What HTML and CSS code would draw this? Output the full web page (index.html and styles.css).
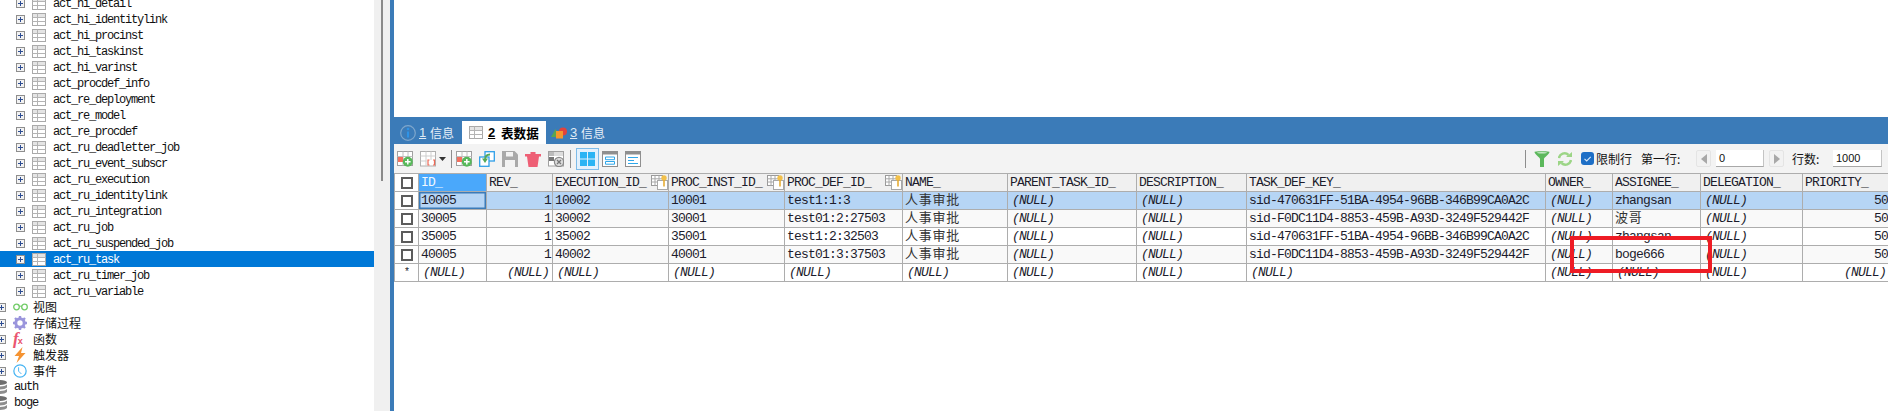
FILE: index.html
```html
<!DOCTYPE html>
<html lang="zh">
<head>
<meta charset="utf-8">
<title>SQLyog</title>
<link rel="stylesheet" href="styles.css">
</head>
<body>
<svg class="defs" width="0" height="0">
  <defs>
    <symbol id="plus" viewBox="0 0 9 9"><rect x=".5" y=".5" width="8" height="8" fill="#f2f2f2" stroke="#8e8e8e"/><path d="M2 4.5h5M4.5 2v5" stroke="#2c4c92" fill="none"/></symbol>
    <symbol id="tbl" viewBox="0 0 14 13"><rect x=".5" y=".5" width="13" height="12" fill="#fff" stroke="#a9a9a9"/><rect x="1" y="1" width="12" height="3" fill="#e4e4e4"/><path d="M.5 4.5h13M.5 8.5h13M5.5 .5v12" stroke="#b4b4b4" fill="none"/></symbol>
    <symbol id="glasses" viewBox="0 0 15 8"><circle cx="3.5" cy="4" r="2.8" fill="none" stroke="#72cc68" stroke-width="1.3"/><circle cx="11.5" cy="4" r="2.8" fill="none" stroke="#72cc68" stroke-width="1.3"/><path d="M6 3.2h3" stroke="#72cc68"/></symbol>
    <symbol id="gear" viewBox="0 0 14 14"><circle cx="7" cy="7" r="4.2" fill="none" stroke="#9a95dc" stroke-width="3"/><path d="M7 0v3M7 11v3M0 7h3M11 7h3M2 2l2 2M10 10l2 2M12 2l-2 2M4 10l-2 2" stroke="#9a95dc" stroke-width="2.4"/></symbol>
    <symbol id="bolt" viewBox="0 0 12 16"><path d="M8.500 0 .5 9h4.500L2.500 16 11.500 6H7z" fill="#f59332"/></symbol>
    <symbol id="clock" viewBox="0 0 15 15"><circle cx="7.5" cy="7.5" r="6.6" fill="#fff" stroke="#45b3f2" stroke-width="1.3"/><path d="M6 3.5v4.2l3 3" fill="none" stroke="#45b3f2"/></symbol>
    <symbol id="db" viewBox="0 0 7 14"><ellipse cx="0" cy="2.5" rx="7" ry="2.5" fill="#6e6e6e"/><path d="M-7 4.500c2 2.500 12 2.500 14 0v3c-2 2.500-12 2.500-14 0zM-7 9c2 2.500 12 2.500 14 0v3c-2 2.500-12 2.500-14 0z" fill="#8d8d8d"/></symbol>
    <symbol id="addrow" viewBox="0 0 16 16"><rect x=".5" y=".5" width="15" height="14" fill="#fff" stroke="#a0a0a0"/><path d="M.5 5.500h15M.5 10h15M6 .5v14M11 .5v14" stroke="#c0c0c0"/><rect x="1" y="6" width="5" height="5" fill="#f3705f"/><circle cx="10.800" cy="10.800" r="5" fill="#58b85a"/><path d="M8 10.800h5.600M10.800 8v5.600" stroke="#fff" stroke-width="1.500"/></symbol>
    <symbol id="filtergrid" viewBox="0 0 26 16"><rect x=".5" y=".5" width="15" height="14.500" fill="#fff" stroke="#b0b0b0"/><path d="M.5 5h15M.5 10h6M6 .5V15M11 .5V9" stroke="#cfcfcf"/><path d="M9.500 9H8v5h1.500M13 9h1.500v5H13" fill="none" stroke="#ee6b58" stroke-width="1.200"/><path d="M19 6h7l-3.500 4z" fill="#333"/></symbol>
    <symbol id="paste" viewBox="0 0 16 16"><rect x="6" y=".7" width="9.300" height="9.300" fill="#fff" stroke="#2f9fe8" stroke-width="1.300"/><rect x=".7" y="6" width="9.300" height="9.300" fill="#fff" stroke="#2f9fe8" stroke-width="1.300"/><path d="M11 3.500C7 3.500 6 6 6 9" fill="none" stroke="#55a858" stroke-width="1.800"/><path d="M3 7.500h6L6 12z" fill="#55a858"/></symbol>
    <symbol id="save" viewBox="0 0 16 16"><path d="M0 0h12.500L16 3.500V16H0z" fill="#a9a9a9"/><rect x="4" y="1" width="7" height="4.500" fill="#f3f3f3"/><rect x="3" y="9" width="10" height="7" fill="#f3f3f3"/></symbol>
    <symbol id="trash" viewBox="0 0 16 16"><path d="M0 3h16v2.500H0zM5.500 1h5v2h-5zM2 5.500h12L12.500 16h-9z" fill="#ee5f75"/></symbol>
    <symbol id="cancel" viewBox="0 0 16 16"><rect x=".5" y=".5" width="15" height="14.500" fill="#fff" stroke="#a0a0a0"/><rect x="1" y="1" width="5" height="4" fill="#bbb"/><rect x="1" y="6" width="5" height="4" fill="#777"/><rect x="6" y="1" width="9" height="4" fill="#ddd"/><circle cx="11" cy="11" r="4.600" fill="#ddd" stroke="#8a8a8a" stroke-width="1.200"/><path d="M9 9l4 4M13 9l-4 4" stroke="#777" stroke-width="1.300"/></symbol>
    <symbol id="panes" viewBox="0 0 15 14"><path d="M0 0h7v6.500H0zM8 0h7v6.500H8zM0 7.500h7V14H0zM8 7.500h7V14H8z" fill="#2bb4f4"/></symbol>
    <symbol id="form" viewBox="0 0 16 16"><rect x=".5" y=".5" width="15" height="15" fill="#fff" stroke="#8f8f8f"/><rect x="0" y="0" width="16" height="3.500" fill="#8f8f8f"/><path d="M3.500 6h9v2.700h-9zM3.500 10.500h9v2.700h-9z" fill="none" stroke="#2fa7ea"/></symbol>
    <symbol id="text" viewBox="0 0 16 16"><rect x=".5" y=".5" width="15" height="15" fill="#fff" stroke="#8f8f8f"/><rect x="0" y="0" width="16" height="3.500" fill="#8f8f8f"/><path d="M3 6.500h10M3 9.500h6M3 12.500h10" fill="none" stroke="#2fa7ea"/></symbol>
    <symbol id="funnel" viewBox="0 0 16 16"><path d="M.5 1c0-1 15-1 15 0 0 2-5.500 5.500-5.500 7v8H6V8C6 6.500.5 3 .5 1z" fill="#5cb85c"/><ellipse cx="8" cy="1.800" rx="5" ry=".8" fill="#c8e9c8"/></symbol>
    <symbol id="refresh" viewBox="0 0 14 14"><path d="M1 6C1.500 2 7-.5 10.500 3" fill="none" stroke="#9cd586" stroke-width="2.500"/><path d="M8 5h6V0z" fill="#9cd586"/><path d="M13 8c-.5 4-6 6.500-9.500 3" fill="none" stroke="#9cd586" stroke-width="2.500"/><path d="M6 9H0v5z" fill="#9cd586"/></symbol>
    <symbol id="check" viewBox="0 0 13 13"><rect width="13" height="13" rx="3" fill="#1e6fc6"/><path d="M3.500 6.800l2.200 2.200 4-4.200" fill="none" stroke="#dbe9f8" stroke-width="1.100"/></symbol>
    <symbol id="key" viewBox="0 0 17 15"><rect x=".5" y=".5" width="11" height="10" fill="#fff" stroke="#9a9a9a"/><path d="M.5 3.800h11M.5 7h11M4 .5v10M8 .5v10" stroke="#a8a8a8"/><rect x="6.500" y="5.500" width="10" height="9" fill="#fff" stroke="#a8a8a8"/><circle cx="13" cy="3" r="2.700" fill="#f2c04a"/><path d="M13 5v6.500" stroke="#e6ad35" stroke-width="1.600"/></symbol>
    <symbol id="info" viewBox="0 0 16 16"><circle cx="8" cy="8" r="7.300" fill="none" stroke="#7fa7cc" stroke-width="1.200"/><path d="M8 6.500v6" stroke="#2f93e6" stroke-width="2"/><circle cx="8" cy="4" r="1.300" fill="#2f93e6"/></symbol>
    <symbol id="shapes" viewBox="0 0 16 12"><path d="M0 10 4.500 2 9 10z" fill="#5aa552"/><circle cx="12" cy="4.500" r="4" fill="#e2433c"/><rect x="5" y="4" width="7" height="7.500" fill="#f5962e"/></symbol>
  </defs>
</svg>

<div class="app">
  <nav class="tree">
    <div class="row t"><svg class="pb"><use href="#plus"/></svg><svg class="ti"><use href="#tbl"/></svg><span>act_hi_detail</span></div>
    <div class="row t"><svg class="pb"><use href="#plus"/></svg><svg class="ti"><use href="#tbl"/></svg><span>act_hi_identitylink</span></div>
    <div class="row t"><svg class="pb"><use href="#plus"/></svg><svg class="ti"><use href="#tbl"/></svg><span>act_hi_procinst</span></div>
    <div class="row t"><svg class="pb"><use href="#plus"/></svg><svg class="ti"><use href="#tbl"/></svg><span>act_hi_taskinst</span></div>
    <div class="row t"><svg class="pb"><use href="#plus"/></svg><svg class="ti"><use href="#tbl"/></svg><span>act_hi_varinst</span></div>
    <div class="row t"><svg class="pb"><use href="#plus"/></svg><svg class="ti"><use href="#tbl"/></svg><span>act_procdef_info</span></div>
    <div class="row t"><svg class="pb"><use href="#plus"/></svg><svg class="ti"><use href="#tbl"/></svg><span>act_re_deployment</span></div>
    <div class="row t"><svg class="pb"><use href="#plus"/></svg><svg class="ti"><use href="#tbl"/></svg><span>act_re_model</span></div>
    <div class="row t"><svg class="pb"><use href="#plus"/></svg><svg class="ti"><use href="#tbl"/></svg><span>act_re_procdef</span></div>
    <div class="row t"><svg class="pb"><use href="#plus"/></svg><svg class="ti"><use href="#tbl"/></svg><span>act_ru_deadletter_job</span></div>
    <div class="row t"><svg class="pb"><use href="#plus"/></svg><svg class="ti"><use href="#tbl"/></svg><span>act_ru_event_subscr</span></div>
    <div class="row t"><svg class="pb"><use href="#plus"/></svg><svg class="ti"><use href="#tbl"/></svg><span>act_ru_execution</span></div>
    <div class="row t"><svg class="pb"><use href="#plus"/></svg><svg class="ti"><use href="#tbl"/></svg><span>act_ru_identitylink</span></div>
    <div class="row t"><svg class="pb"><use href="#plus"/></svg><svg class="ti"><use href="#tbl"/></svg><span>act_ru_integration</span></div>
    <div class="row t"><svg class="pb"><use href="#plus"/></svg><svg class="ti"><use href="#tbl"/></svg><span>act_ru_job</span></div>
    <div class="row t"><svg class="pb"><use href="#plus"/></svg><svg class="ti"><use href="#tbl"/></svg><span>act_ru_suspended_job</span></div>
    <div class="row t sel"><svg class="pb"><use href="#plus"/></svg><svg class="ti"><use href="#tbl"/></svg><span>act_ru_task</span></div>
    <div class="row t"><svg class="pb"><use href="#plus"/></svg><svg class="ti"><use href="#tbl"/></svg><span>act_ru_timer_job</span></div>
    <div class="row t"><svg class="pb"><use href="#plus"/></svg><svg class="ti"><use href="#tbl"/></svg><span>act_ru_variable</span></div>
    <div class="row g"><svg class="pb"><use href="#plus"/></svg><svg class="gi gl"><use href="#glasses"/></svg><span>视图</span></div>
    <div class="row g"><svg class="pb"><use href="#plus"/></svg><svg class="gi"><use href="#gear"/></svg><span>存储过程</span></div>
    <div class="row g"><svg class="pb"><use href="#plus"/></svg><i class="fx">f<b>x</b></i><span>函数</span></div>
    <div class="row g"><svg class="pb"><use href="#plus"/></svg><svg class="gi"><use href="#bolt"/></svg><span>触发器</span></div>
    <div class="row g"><svg class="pb"><use href="#plus"/></svg><svg class="gi"><use href="#clock"/></svg><span>事件</span></div>
    <div class="row d"><svg class="di"><use href="#db"/></svg><span>auth</span></div>
    <div class="row d"><svg class="di"><use href="#db"/></svg><span>boge</span></div>
  </nav>
  <div class="gutter"><div class="thumb"></div></div>
  <main class="main">
    <div class="blank"></div>
    <div class="tabs">
      <div class="tab first"><svg class="tabicon"><use href="#info"/></svg><u>1</u><span>信息</span></div>
      <div class="tab active"><svg class="tabtbl"><use href="#tbl"/></svg><u>2</u><span>表数据</span></div>
      <div class="tab third"><svg class="tabicon"><use href="#shapes"/></svg><u>3</u><span>信息</span></div>
    </div>
    <div class="toolbar">
      <svg class="ic"><use href="#addrow"/></svg>
      <svg class="ic wide"><use href="#filtergrid"/></svg>
      <span class="sep s1"></span>
      <svg class="ic"><use href="#addrow"/></svg>
      <svg class="ic"><use href="#paste"/></svg>
      <svg class="ic"><use href="#save"/></svg>
      <svg class="ic"><use href="#trash"/></svg>
      <svg class="ic c6"><use href="#cancel"/></svg>
      <span class="sep s2"></span>
      <span class="toggle"><svg class="pn"><use href="#panes"/></svg></span>
      <svg class="ic"><use href="#form"/></svg>
      <svg class="ic"><use href="#text"/></svg>
      <div class="tools-right">
        <span class="sep s3"></span>
        <svg class="funnel"><use href="#funnel"/></svg>
        <svg class="refresh"><use href="#refresh"/></svg>
        <svg class="check"><use href="#check"/></svg>
        <span class="lbl limit">限制行</span>
        <span class="lbl first-row">第一行:</span>
        <span class="spin"><i class="tri left"></i></span>
        <span class="input">0</span>
        <span class="spin"><i class="tri right"></i></span>
        <span class="lbl count">行数:</span>
        <span class="input small">1000</span>
      </div>
    </div>
    <div class="grid">
      <table>
        <colgroup>
          <col class="c-chk"><col class="c-id"><col class="c-rev"><col class="c-exec"><col class="c-inst"><col class="c-def"><col class="c-name"><col class="c-parent"><col class="c-desc"><col class="c-key"><col class="c-owner"><col class="c-asg"><col class="c-del"><col class="c-pri">
        </colgroup>
        <thead>
          <tr>
            <th class="chk"><i class="box"></i></th>
            <th class="curhead">ID_</th>
            <th>REV_</th>
            <th><div class="hd">EXECUTION_ID_<svg class="key"><use href="#key"/></svg></div></th>
            <th><div class="hd">PROC_INST_ID_<svg class="key"><use href="#key"/></svg></div></th>
            <th><div class="hd">PROC_DEF_ID_<svg class="key"><use href="#key"/></svg></div></th>
            <th>NAME_</th>
            <th>PARENT_TASK_ID_</th>
            <th>DESCRIPTION_</th>
            <th>TASK_DEF_KEY_</th>
            <th>OWNER_</th>
            <th>ASSIGNEE_</th>
            <th>DELEGATION_</th>
            <th>PRIORITY_</th>
          </tr>
        </thead>
        <tbody>
          <tr class="picked">
            <td class="chk"><i class="box"></i></td><td class="cur">10005</td><td class="num">1</td><td>10002</td><td>10001</td><td>test1:1:3</td><td class="cjk">人事审批</td><td class="nul">(NULL)</td><td class="nul">(NULL)</td><td>sid-470631FF-51BA-4954-96BB-346B99CA0A2C</td><td class="nul">(NULL)</td><td>zhangsan</td><td class="nul">(NULL)</td><td class="num">50</td>
          </tr>
          <tr class="alt">
            <td class="chk"><i class="box"></i></td><td>30005</td><td class="num">1</td><td>30002</td><td>30001</td><td>test01:2:27503</td><td class="cjk">人事审批</td><td class="nul">(NULL)</td><td class="nul">(NULL)</td><td>sid-F0DC11D4-8853-459B-A93D-3249F529442F</td><td class="nul">(NULL)</td><td class="cjk">波哥</td><td class="nul">(NULL)</td><td class="num">50</td>
          </tr>
          <tr>
            <td class="chk"><i class="box"></i></td><td>35005</td><td class="num">1</td><td>35002</td><td>35001</td><td>test1:2:32503</td><td class="cjk">人事审批</td><td class="nul">(NULL)</td><td class="nul">(NULL)</td><td>sid-470631FF-51BA-4954-96BB-346B99CA0A2C</td><td class="nul">(NULL)</td><td>zhangsan</td><td class="nul">(NULL)</td><td class="num">50</td>
          </tr>
          <tr class="alt">
            <td class="chk"><i class="box"></i></td><td>40005</td><td class="num">1</td><td>40002</td><td>40001</td><td>test01:3:37503</td><td class="cjk">人事审批</td><td class="nul">(NULL)</td><td class="nul">(NULL)</td><td>sid-F0DC11D4-8853-459B-A93D-3249F529442F</td><td class="nul">(NULL)</td><td>boge666</td><td class="nul">(NULL)</td><td class="num">50</td>
          </tr>
          <tr>
            <td class="chk star">*</td><td class="nul">(NULL)</td><td class="nul num">(NULL)</td><td class="nul">(NULL)</td><td class="nul">(NULL)</td><td class="nul">(NULL)</td><td class="nul">(NULL)</td><td class="nul">(NULL)</td><td class="nul">(NULL)</td><td class="nul">(NULL)</td><td class="nul">(NULL)</td><td class="nul">(NULL)</td><td class="nul">(NULL)</td><td class="nul num">(NULL)</td>
          </tr>
        </tbody>
      </table>
      <div class="mark"></div>
    </div>
  </main>
</div>
</body>
</html>
```

FILE: styles.css
```css
* { box-sizing: border-box; }
html, body { margin: 0; padding: 0; height: 411px; overflow: hidden; background: #fff; }
.defs { position: absolute; }
.app { display: flex; height: 411px; overflow: hidden; }

/* tree */
.tree { width: 374px; flex: none; margin-top: -5px; overflow: hidden; color: #111; }
.row { height: 16px; display: flex; align-items: center; white-space: nowrap; }
.row span { font: 12px/16px "Liberation Mono", monospace; letter-spacing: -1.2px; }
.pb { width: 9px; height: 9px; flex: none; }
.ti { width: 14px; height: 13px; flex: none; margin: 0 7px 0 7px; }
.t { padding-left: 16px; }
.t span { padding-top: 1px; }
.sel { background: #0078d7; color: #fff; }
.g { padding-left: 0; margin-left: -3px; }
.g span { font: 12px/16px "Noto Sans CJK SC", sans-serif; letter-spacing: 0; margin-left: 0; }
.gi { width: 14px; height: 16px; flex: none; margin: 0 6px 0 7px; }
.gl { width: 15px; height: 8px; margin-right: 5px; }
.fx { width: 14px; flex: none; margin: 0 6px 0 7px; font: italic 700 17px/16px "Liberation Serif", serif; color: #ea5570; white-space: nowrap; }
.fx b { font: 700 9px/9px "Liberation Sans", sans-serif; color: #e8506a; margin-left: -1px; }
.d { padding-left: 0; }
.di { width: 7px; height: 14px; flex: none; margin-right: 7px; }

/* gutter */
.gutter { width: 16px; flex: none; background: #f0f0f0; padding-left: 7px; }
.thumb { width: 2px; height: 181px; background: #8a8a8a; }

/* main */
.main { flex: 1; min-width: 0; border-left: 4px solid #3b7bb8; overflow: hidden; }
.blank { height: 117px; background: #fff; }
.tabs { height: 27px; background: #3b7bb8; display: flex; align-items: flex-end; padding-left: 6px; color: #e6eef7; }
.tab { height: 23px; display: flex; align-items: center; font: 12px "Noto Sans CJK SC", sans-serif; }
.tab u { font: 13px "Liberation Sans", sans-serif; width: 7px; margin: 0 4px 0 3px; color: #dfeaf5; }
.tabicon { width: 16px; height: 16px; flex: none; }
.first { width: 62px; }
.active { width: 84px; background: #fff; color: #000; padding-left: 7px; font-weight: 700; font-size: 12.600px; }
.active u { font-weight: 700; width: 8px; margin: 0 5px 0 5px; color: #000; }
.tabtbl { width: 14px; height: 13px; flex: none; }
.third { padding-left: 5px; }

.toolbar { height: 29px; background: #f3f3f3; display: flex; align-items: center; padding-left: 3px; }
.ic { width: 16px; height: 16px; flex: none; margin-right: 7px; }
.wide { width: 26px; margin-right: 5px; }
.c6 { margin-right: 6px; }
.sep { width: 1px; height: 18px; background: #8d8d8d; flex: none; }
.s1 { margin-right: 4px; }
.s2 { margin-right: 5px; }
.toggle { width: 23px; height: 22px; flex: none; margin-right: 3px; background: #e3f1fd; border: 1px solid #7fbce9; display: flex; align-items: center; justify-content: center; }
.pn { width: 15px; height: 14px; }
.tools-right { margin-left: auto; padding-right: 6px; display: flex; align-items: center; }
.s3 { margin-right: 8px; }
.funnel { width: 16px; height: 16px; margin-right: 8px; }
.refresh { width: 14px; height: 14px; margin-right: 9px; }
.check { width: 13px; height: 13px; margin-right: 2px; }
.lbl { font: 12px/16px "Noto Sans CJK SC", sans-serif; color: #111; white-space: nowrap; }
.limit { margin-right: 9px; }
.first-row { width: 42px; margin-right: 13px; }
.spin { width: 15px; height: 17px; background: #f2f2f2; border: 1px solid #e4e4e4; border-radius: 2px; display: flex; align-items: center; justify-content: center; flex: none; }
.tri { width: 0; height: 0; border: 5px solid transparent; }
.tri.left { border-right: 6px solid #a8a8a8; border-left: 0; }
.tri.right { border-left: 6px solid #a8a8a8; border-right: 0; }
.input { width: 48px; height: 17px; margin: 0 5px; background: #fff; border-right: 1px solid #c4c4c4; border-bottom: 1px solid #a8a8a8; font: 11px/16px "Liberation Sans", sans-serif; padding-left: 3px; color: #111; flex: none; }
.count { width: 30px; margin: 0 11px 0 8px; }
.small { width: 49px; margin: 0; }

/* grid */
.grid { position: relative; }
table { border-collapse: collapse; table-layout: fixed; width: 1495px; font: 13px/17px "Liberation Mono", monospace; letter-spacing: -.8px; color: #1c1c2c; }
.c-chk { width: 24px; } .c-id { width: 68px; } .c-rev { width: 66px; } .c-exec { width: 116px; }
.c-inst { width: 116px; } .c-def { width: 118px; } .c-name { width: 105px; } .c-parent { width: 129px; }
.c-desc { width: 110px; } .c-key { width: 299px; } .c-owner { width: 67px; } .c-asg { width: 88px; }
.c-del { width: 102px; } .c-pri { width: 87px; }
th, td { border: 1px solid #adadad; padding: 0 2px; height: 18px; white-space: nowrap; overflow: hidden; text-align: left; font-weight: 400; }
thead th { height: 17px; background: #f0f0f0; padding-left: 2px; }
thead tr { height: 17px; }
tbody tr { height: 18px; background: #fff; }
tr.alt { background: #f9f9f9; }
tr.picked { background: #b6d5f5; }
.num { text-align: right; padding-right: 1px; }
.nul { font-style: italic; padding-left: 4px; padding-right: 4px; }
.num.nul { padding-right: 3px; }
.cjk { font-family: "Liberation Mono", "Noto Sans CJK SC", monospace; font-size: 13px; letter-spacing: .75px; padding-left: 2px; color: #333; }
.chk { background: #fff; padding: 0; text-align: center; vertical-align: middle; }
thead .chk { background: #fff; padding: 0; }
.box { display: block; width: 12px; height: 12px; margin: 0 auto; border: 2px solid #5c5c5c; background: #fff; }
.star { font-size: 10px; }
.curhead { background: #4aa8fb !important; color: #f2f8ff; }
.cur { box-shadow: inset 0 0 0 1.500px #3b7bb8; padding-left: 2px; }
.hd { display: flex; justify-content: space-between; align-items: center; }
.key { width: 17px; height: 15px; flex: none; margin-right: -2px; }

.mark { position: absolute; left: 1176px; top: 63px; width: 142px; height: 37px; border: 4px solid #ee1c25; }
```
